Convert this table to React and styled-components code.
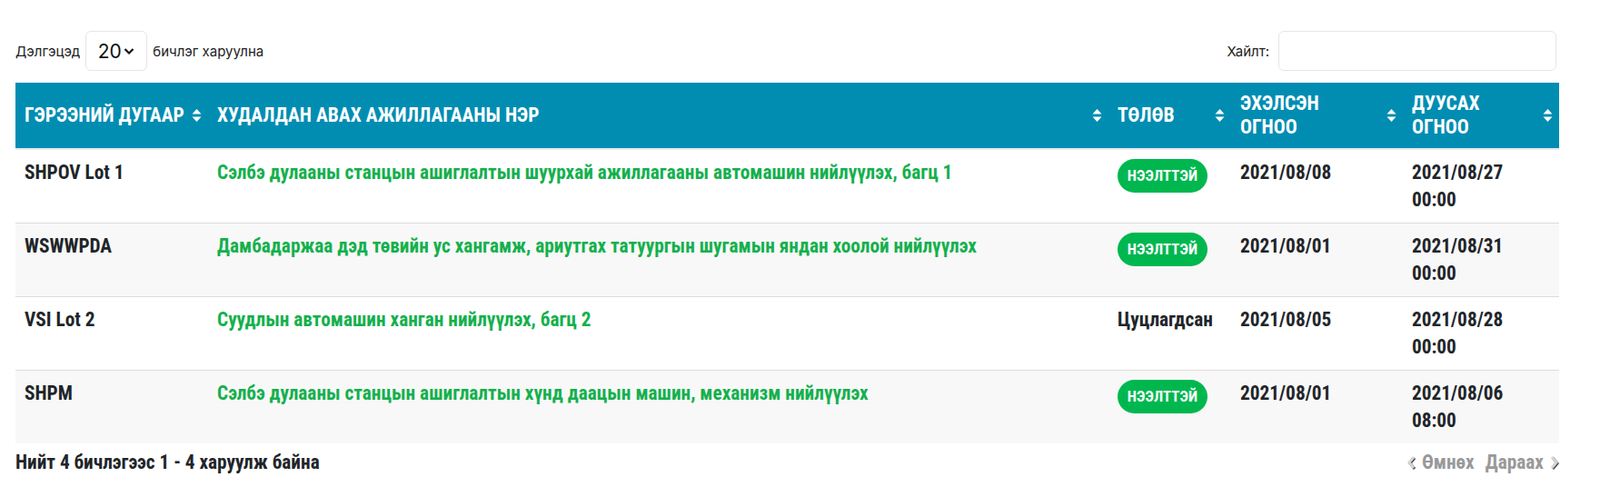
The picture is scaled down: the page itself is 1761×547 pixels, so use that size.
import React from "react";
import styled, { createGlobalStyle } from "styled-components";

const rows = [
  {
    code: "SHPOV Lot 1",
    name: "Сэлбэ дулааны станцын ашиглалтын шуурхай ажиллагааны автомашин нийлүүлэх, багц 1",
    open: true,
    start: "2021/08/08",
    end: ["2021/08/27", "00:00"],
  },
  {
    code: "WSWWPDA",
    name: "Дамбадаржаа дэд төвийн ус хангамж, ариутгах татуургын шугамын яндан хоолой нийлүүлэх",
    open: true,
    start: "2021/08/01",
    end: ["2021/08/31", "00:00"],
  },
  {
    code: "VSI Lot 2",
    name: "Суудлын автомашин ханган нийлүүлэх, багц 2",
    open: false,
    start: "2021/08/05",
    end: ["2021/08/28", "00:00"],
  },
  {
    code: "SHPM",
    name: "Сэлбэ дулааны станцын ашиглалтын хүнд даацын машин, механизм нийлүүлэх",
    open: true,
    start: "2021/08/01",
    end: ["2021/08/06", "08:00"],
  },
];

const columns = [
  { label: ["ГЭРЭЭНИЙ ДУГААР"], width: 212 },
  { label: ["ХУДАЛДАН АВАХ АЖИЛЛАГААНЫ НЭР"], width: 991 },
  { label: ["ТӨЛӨВ"], width: 135 },
  { label: ["ЭХЭЛСЭН", "ОГНОО"], width: 189 },
  { label: ["ДУУСАХ", "ОГНОО"], width: 172 },
];

const condensed = `"Roboto Condensed", "Liberation Sans Narrow", "DejaVu Sans Condensed", Roboto, sans-serif`;

const GlobalStyle = createGlobalStyle`
  body {
    margin: 0;
    background: #fff;
    font-family: Inter, Roboto, sans-serif;
    color: #212529;
  }
`;

const Page = styled.div`
  padding: 34px 0 0 17px;
  width: 1699px;
`;

const Toolbar = styled.div`
  display: flex;
  justify-content: space-between;
  align-items: center;
  height: 44px;
  margin-bottom: 13px;
`;

const Length = styled.label`
  display: flex;
  align-items: center;
  gap: 6px;
  font-size: 15px;
  color: #222;
`;

const SelectBox = styled.div`
  display: flex;
  align-items: center;
  justify-content: center;
  gap: 1px;
  width: 68px;
  height: 44px;
  box-sizing: border-box;
  border: 1px solid #e6e6e6;
  border-radius: 6px;
  font-size: 21px;
  color: #111;
`;

const Search = styled.label`
  display: flex;
  align-items: center;
  gap: 10px;
  font-size: 15px;
  color: #222;
  margin-right: 3px;
`;

const SearchInput = styled.input`
  width: 306px;
  height: 44px;
  box-sizing: border-box;
  border: 1px solid #e6e6e6;
  border-radius: 6px;
  outline: none;
`;

const Table = styled.table`
  width: 1699px;
  border-collapse: collapse;
  table-layout: fixed;
  font-family: ${condensed};
  font-weight: 700;
`;

const HeadRow = styled.tr`
  background: #018db2;
  border-bottom: 2px solid #e6e9ee;
`;

const HeadCell = styled.th`
  position: relative;
  height: 71px;
  padding: 10px 26px 10px 10px;
  box-sizing: border-box;
  text-align: left;
  vertical-align: middle;
  color: #fff;
  font-size: 21.5px;
  line-height: 26px;
  font-weight: 700;
`;

const Sort = styled.svg`
  position: absolute;
  right: 7px;
  top: 50%;
  transform: translateY(-50%);
`;

const Row = styled.tr`
  background: ${(p) => (p.$striped ? "#f8f8f8" : "#fff")};
  border-top: 1px solid #dcdcdc;
  &:first-child {
    border-top: none;
  }
`;

const Cell = styled.td`
  padding: 10px 10px;
  vertical-align: top;
  font-size: 21.3px;
  line-height: 30px;
  color: ${(p) => (p.$link ? "#14b04d" : "#212529")};
`;

const Badge = styled.span`
  display: inline-flex;
  align-items: center;
  justify-content: center;
  width: 99px;
  height: 37px;
  border-radius: 19px;
  background: #00b74f;
  color: #fff;
  font-size: 16.5px;
  letter-spacing: 0.2px;
`;

const Footer = styled.div`
  display: flex;
  justify-content: space-between;
  align-items: center;
  margin-top: 6px;
  font-family: ${condensed};
  font-weight: 700;
  font-size: 21.3px;
  line-height: 30px;
`;

const Pager = styled.div`
  display: flex;
  align-items: center;
  gap: 12px;
  color: #999;
  margin-right: -1px;
`;

const PageLink = styled.span`
  display: flex;
  align-items: center;
  gap: 5px;
`;

function SortIcon() {
  return (
    <Sort width="11" height="16" viewBox="0 0 11 16">
      <path d="M5.5 1 L10.5 6.5 H0.5 Z" fill="#fff" />
      <path d="M5.5 15 L10.5 9.5 H0.5 Z" fill="#fff" />
    </Sort>
  );
}

function Chevron({ dir }) {
  const d = dir === "left" ? "M9 3 L4 9 L9 15" : "M4 3 L9 9 L4 15";
  return (
    <svg width="13" height="18" viewBox="0 0 13 18">
      <path d={d} transform="translate(1 1)" fill="none" stroke="#444" strokeWidth="3" />
      <path d={d} fill="none" stroke="#d4d4d4" strokeWidth="3" />
    </svg>
  );
}

export default function App() {
  return (
    <>
      <GlobalStyle />
      <Page>
        <Toolbar>
          <Length>
            Дэлгэцэд
            <SelectBox>
              20
              <svg width="14" height="14" viewBox="0 0 14 14">
                <path d="M2.5 5 L7 9.5 L11.5 5" fill="none" stroke="#111" strokeWidth="2.2" />
              </svg>
            </SelectBox>
            бичлэг харуулна
          </Length>
          <Search>
            Хайлт:
            <SearchInput type="text" />
          </Search>
        </Toolbar>
        <Table>
          <colgroup>
            {columns.map((c, i) => (
              <col key={i} style={{ width: c.width }} />
            ))}
          </colgroup>
          <thead>
            <HeadRow>
              {columns.map((c, i) => (
                <HeadCell key={i}>
                  {c.label.map((l, j) => (
                    <div key={j}>{l}</div>
                  ))}
                  <SortIcon />
                </HeadCell>
              ))}
            </HeadRow>
          </thead>
          <tbody>
            {rows.map((r, i) => (
              <Row key={i} $striped={i % 2 === 1}>
                <Cell>{r.code}</Cell>
                <Cell $link>{r.name}</Cell>
                <Cell>{r.open ? <Badge>НЭЭЛТТЭЙ</Badge> : "Цуцлагдсан"}</Cell>
                <Cell>{r.start}</Cell>
                <Cell>
                  {r.end[0]}
                  <br />
                  {r.end[1]}
                </Cell>
              </Row>
            ))}
          </tbody>
        </Table>
        <Footer>
          <span>Нийт 4 бичлэгээс 1 - 4 харуулж байна</span>
          <Pager>
            <PageLink>
              <Chevron dir="left" />
              Өмнөх
            </PageLink>
            <PageLink>
              Дараах
              <Chevron dir="right" />
            </PageLink>
          </Pager>
        </Footer>
      </Page>
    </>
  );
}
